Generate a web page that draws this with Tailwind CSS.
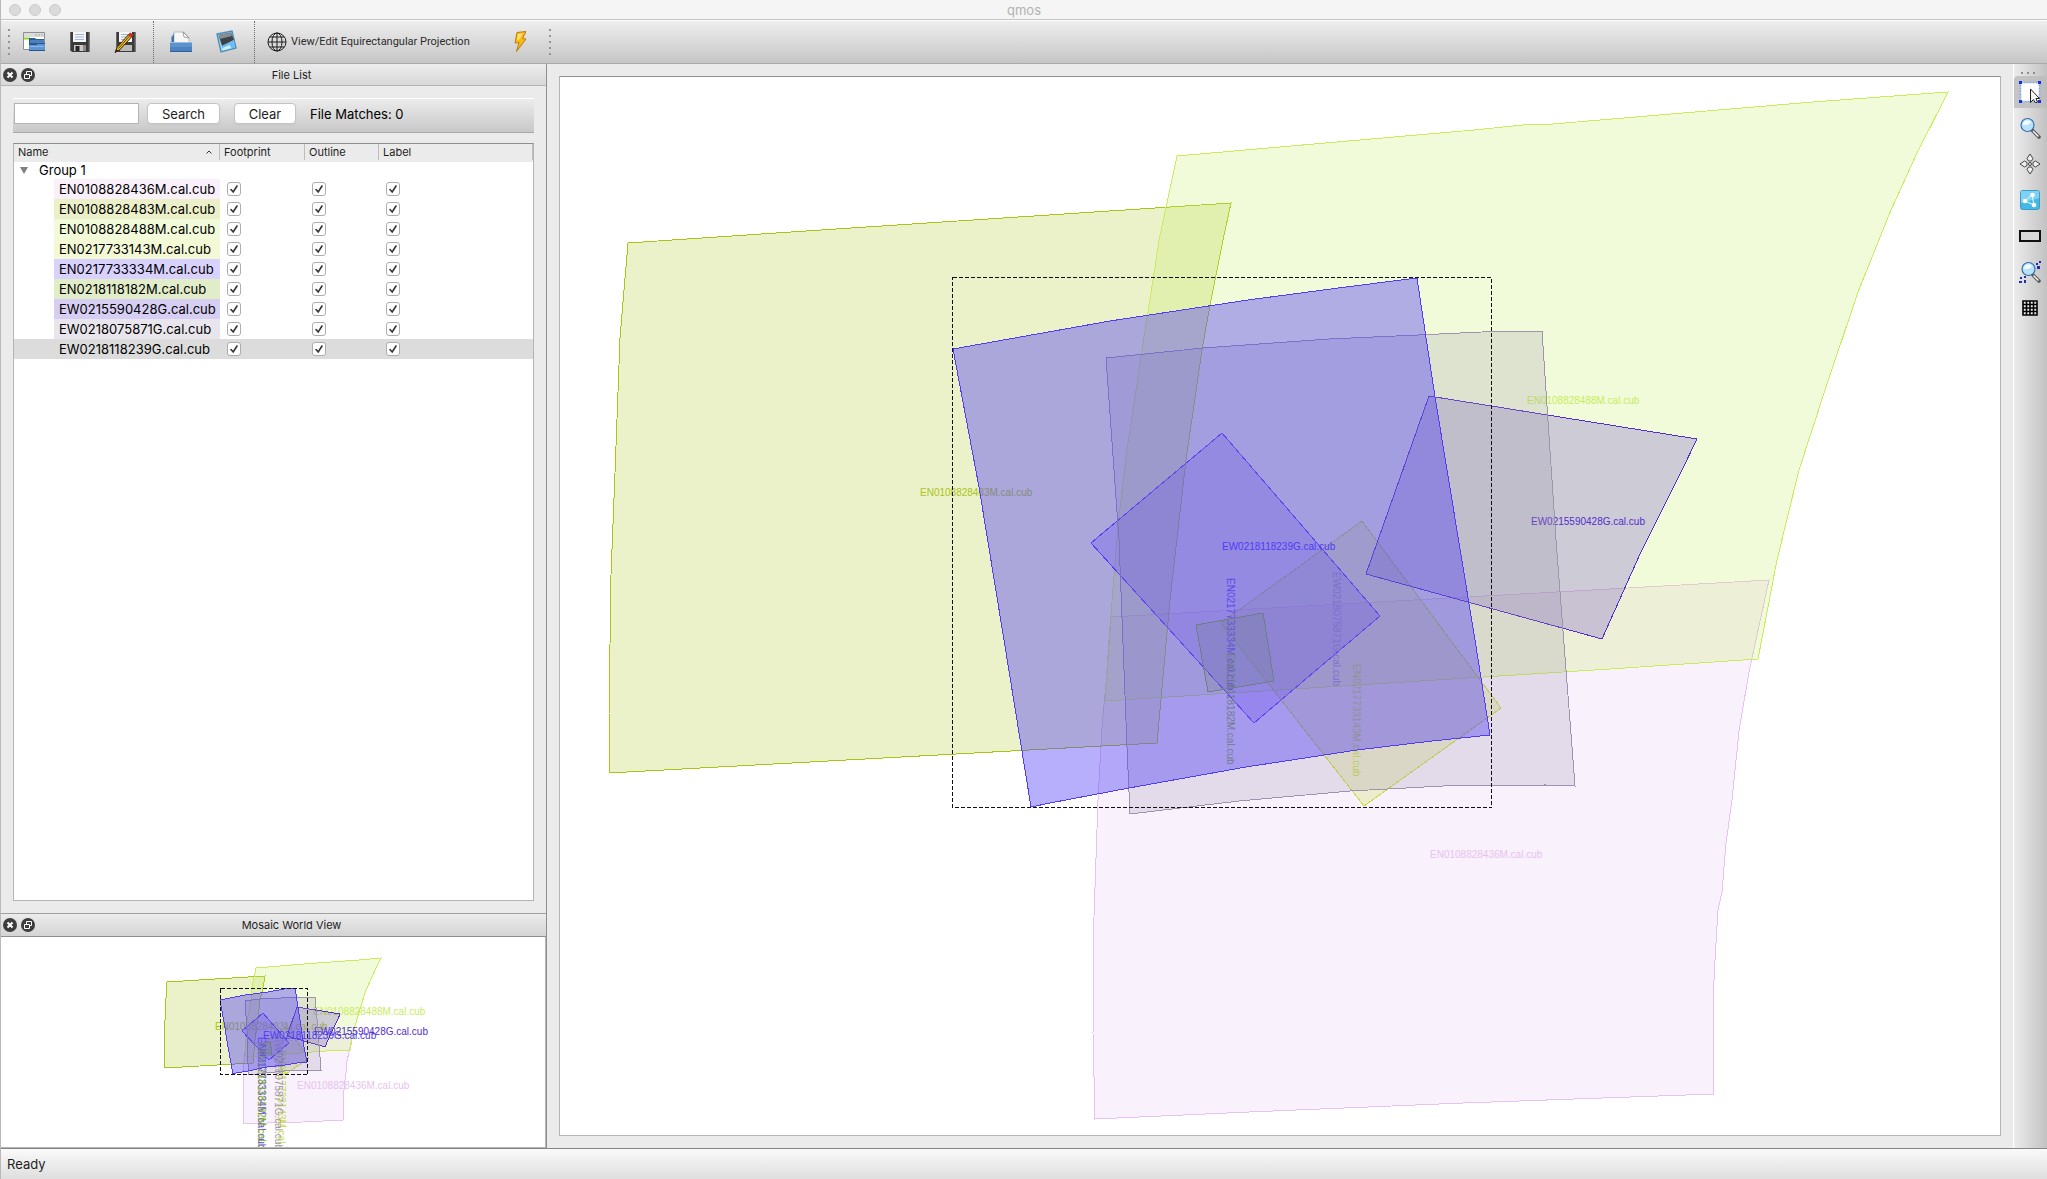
<!DOCTYPE html>
<html lang="en">
<head>
    <meta charset="UTF-8">
    <meta name="viewport" content="width=device-width, initial-scale=1.0">
    <title>qmos</title>
    <script src="https://cdn.jsdelivr.net/npm/@tailwindcss/browser@4"></script>
</head>
<body class="flex h-screen flex-col overflow-hidden border-l border-[#b9b9b9] bg-[#ebebeb] font-['Inter','Liberation_Sans',sans-serif] text-[13px] text-[#1e1e1e]">

    <!-- window title -->
    <header class="flex h-5 shrink-0 items-center border-b border-[#c4c4c4] bg-[#f5f5f5] px-2">
        <div class="flex flex-1 gap-2">
            <span class="size-3 rounded-full border border-[#cbcbcb] bg-[#dadada]"></span>
            <span class="size-3 rounded-full border border-[#cbcbcb] bg-[#dadada]"></span>
            <span class="size-3 rounded-full border border-[#cbcbcb] bg-[#dadada]"></span>
        </div>
        <h1 class="text-[13px] leading-4 text-[#b2b2b2]">qmos</h1>
        <div class="flex-1"></div>
    </header>

    <!-- main toolbar -->
    <div class="flex h-11 shrink-0 items-center border-t border-b border-t-white border-b-[#a9a9a9] bg-linear-to-b from-[#eeeeee] to-[#c6c6c6]">
        <svg class="ml-[7px] h-[26px] w-[2px]" viewBox="0 0 2 26" fill="#949494"><path d="M0 0h2v2H0zM0 6h2v2H0zM0 12h2v2H0zM0 18h2v2H0zM0 24h2v2H0z"/></svg>
        <button class="ml-3 size-6" aria-label="Open project">
            <svg class="size-6" viewBox="0 0 24 24">
                <path d="M1.500 2.500h21v17h-21z" fill="#fff" stroke="#8d8f90"/>
                <path d="M2 3h20v4H2z" fill="#dcdcdc"/>
                <path d="M13 5h2m1 0h2m1 0h2" stroke="#aaa"/>
                <path d="M2 8.500h6" stroke="#8bdc1c" stroke-width="2"/>
                <path d="M7 8h6l1 1h8v5H7z" fill="#2b5c93"/>
                <path d="M8 10h14v3H8z" fill="#4c80ba"/>
                <path d="M7 14h8l1-1h7v8H7z" fill="#5e95d2"/>
                <path d="M7 14.500h8l1-1h7M7 20.500h16" fill="none" stroke="#25588f"/>
                <path d="M8 16.500h14" stroke="#8db7e6"/>
            </svg>
        </button>
        <button class="ml-[22px] size-6" aria-label="Save project">
            <svg class="size-6" viewBox="0 0 24 24">
                <path d="M2 2h19.500v20H4l-2-2z" fill="#3b3b3c"/>
                <path d="M2.500 2v17.500M21 2v19.500" stroke="#696969"/>
                <path d="M5 2h13v10H5z" fill="#f3f5f7"/>
                <path d="M7 4.500h9M7 7h9M7 9.500h9" stroke="#9fb6cc"/>
                <path d="M6 15h12v6H6z" fill="#c9c9c9"/>
                <path d="M7.500 16h4v5h-4z" fill="#272727"/>
                <path d="M15 15h3v6h-3z" fill="#8d8d8d"/>
            </svg>
        </button>
        <button class="ml-[22px] size-6" aria-label="Save project as">
            <svg class="size-6" viewBox="0 0 24 24">
                <path d="M2 2h19.500v20H4l-2-2z" fill="#3b3b3c"/>
                <path d="M2.500 2v17.500M21 2v19.500" stroke="#696969"/>
                <path d="M5 2h13v10H5z" fill="#f3f5f7"/>
                <path d="M7 4.500h9M7 7h9M7 9.500h9" stroke="#9fb6cc"/>
                <path d="M6 15h12v6H6z" fill="#b9b9b9"/>
                <path d="M1 22.500l2-5L15 4l3 2.500L5.500 20z" fill="#f0b92c" stroke="#39290c"/>
                <path d="M4.500 18.500L16 5.500" stroke="#6b4b08"/>
                <path d="M14 5l2-2.500 3.500 2-2 3z" fill="#cf2a20"/>
                <path d="M1 22.500l1.500-3.500 2 2z" fill="#222"/>
            </svg>
        </button>
        <span class="ml-[15px] h-[42px] border-l border-dotted border-[#6d6d6d]"></span>
        <button class="ml-[15px] size-6" aria-label="Open cube">
            <svg class="size-6" viewBox="0 0 24 24">
                <path d="M2 7l4-4v9H2z" fill="#73a7dd"/>
                <path d="M3 8l2-5h10l5 5v7H3z" fill="#3a699f"/>
                <path d="M5 2h10l5 6v5H5z" fill="#f6f6f6" stroke="#a2a2a2" stroke-width=".6"/>
                <path d="M14 2l6 6-5-1z" fill="#fff" stroke="#7d7d7d" stroke-width=".7"/>
                <path d="M1 12h22v9.500H1z" fill="#5d93cd"/>
                <path d="M1 12.500h22" stroke="#95bde8"/>
                <path d="M1 17h22v4.500H1z" fill="#4b82bf"/>
                <path d="M1 21.500h22" stroke="#2f6197"/>
            </svg>
        </button>
        <button class="ml-[22px] size-6" aria-label="Close cube">
            <svg class="size-6" viewBox="0 0 24 24">
                <path d="M2 4l15-3 4 17-15 4z" fill="#a3d9f9" stroke="#4d8fb8" stroke-width="1.400"/>
                <path d="M3.500 5l12.500-2.500L19 10 7 16z" fill="#3e4348"/>
                <path d="M3.500 5l12.500-2.500 1 3.500L5 9z" fill="#868d93"/>
                <path d="M7 16l12-6 1 7.500-13 3z" fill="#6cbdf1"/>
                <path d="M7.500 18l7-3 2 3-9 2.500z" fill="#cdeeff"/>
            </svg>
        </button>
        <span class="ml-[15px] h-[42px] border-l border-dotted border-[#6d6d6d]"></span>
        <button class="ml-3 flex items-center gap-1">
            <svg class="size-5" viewBox="0 0 20 20" fill="none" stroke="#1c1c1c">
                <circle cx="10" cy="10" r="9"/>
                <ellipse cx="10" cy="10" rx="5" ry="9"/>
                <path d="M10 1v18M1 10h18M3 5h14M3 15h14"/>
            </svg>
            <span class="font-['Roboto',sans-serif] text-[11px] leading-4 text-[#2c2c2c]">View/Edit Equirectangular Projection</span>
        </button>
        <button class="ml-[38px] size-6" aria-label="Run">
            <svg class="size-6" viewBox="0 0 24 24">
                <path d="M9 2.500l9-1-3.500 7 3.500.5-9.500 12.500 2.500-9-4 .5z" fill="#fcb914" stroke="#b87e16"/>
                <path d="M10 4l5-.8-4 6.500-2 .3z" fill="#ffe36a"/>
            </svg>
        </button>
        <svg class="ml-[17px] h-[26px] w-[2px]" viewBox="0 0 2 26" fill="#949494"><path d="M0 0h2v2H0zM0 6h2v2H0zM0 12h2v2H0zM0 18h2v2H0zM0 24h2v2H0z"/></svg>
    </div>

    <main class="flex min-h-0 flex-1">
        <!-- docks -->
        <div class="flex w-[546px] shrink-0 flex-col border-r border-[#8f8f8f]">
            <section class="flex min-h-0 flex-1 flex-col">
                <div class="flex h-[22px] shrink-0 items-center gap-1 border-b border-[#b5b5b5] bg-linear-to-b from-[#ececec] to-[#d8d8d8] px-[2px]">
                    <button aria-label="Close file list"><svg class="size-[14px]" viewBox="0 0 14 14"><circle cx="7" cy="7" r="7" fill="#3d3d3d"/><path d="M4.500 4.500l5 5m0-5l-5 5" stroke="#fff" stroke-width="2"/></svg></button>
                    <button aria-label="Float file list"><svg class="size-[14px]" viewBox="0 0 14 14"><circle cx="7" cy="7" r="7" fill="#3d3d3d"/><path d="M3.500 6.500h5v4h-5zM5.500 6V3.500h5v4H9" fill="none" stroke="#fff"/></svg></button>
                    <h2 class="flex-1 text-center text-[11px] leading-4">File List</h2>
                </div>
                <div class="mx-3 mt-3 flex h-[35px] shrink-0 items-center border-t border-b border-t-white border-b-[#a9a9a9] bg-linear-to-b from-[#ececec] to-[#c8c8c8] pb-1 pl-px">
                    <input type="text" aria-label="Search files" class="h-[21px] w-[125px] border border-[#b4b4b4] bg-white px-1">
                    <button class="ml-2 h-[21px] w-[73px] rounded-[4px] border border-[#c4c4c4] bg-white leading-4 shadow-xs">Search</button>
                    <button class="ml-[14px] h-[21px] w-[62px] rounded-[4px] border border-[#c4c4c4] bg-white leading-4 shadow-xs">Clear</button>
                    <span class="ml-[14px] leading-4 text-black">File Matches: 0</span>
                </div>
                <div class="mx-3 mt-[10px] mb-3 min-h-0 flex-1 overflow-hidden border border-[#b4b4b4] border-t-[#8e8e8e] bg-white">
                    <table class="w-full table-fixed border-collapse text-left">
                        <thead>
                            <tr class="h-[18px] bg-[#ebebeb] text-[11px] leading-4">
                                <th class="w-[206px] p-0 pb-[2px] pl-1 font-normal">
                                    <div class="flex items-center justify-between border-r border-[#bdbdbd] pr-[7px]">Name
                                        <svg class="h-1 w-[6px]" viewBox="0 0 6 4" fill="none" stroke="#333"><path d="M.5 3.500L3 1l2.500 2.500"/></svg>
                                    </div>
                                </th>
                                <th class="w-[85px] p-0 pb-[2px] pl-1 font-normal"><div class="border-r border-[#bdbdbd]">Footprint</div></th>
                                <th class="w-[74px] p-0 pb-[2px] pl-1 font-normal"><div class="border-r border-[#bdbdbd]">Outline</div></th>
                                <th class="p-0 pb-[2px] pl-1 font-normal"><div class="border-r border-[#bdbdbd]">Label</div></th>
                            </tr>
                        </thead>
                        <tbody id="fileRows" class="text-black">
                            <tr class="h-[17px] leading-[17px]">
                                <td class="p-0 pl-[6px]" colspan="4">
                                    <div class="flex items-center gap-[11px]">
                                        <svg class="h-[7px] w-2" viewBox="0 0 8 7" fill="#808080"><path d="M0 0h8L4 7z"/></svg>
                                        Group 1
                                    </div>
                                </td>
                            </tr>
                        </tbody>
                    </table>
                </div>
            </section>
            <section class="shrink-0 border-t border-[#a0a0a0]">
                <div class="flex h-[23px] items-center gap-1 border-b border-[#8f8f8f] bg-linear-to-b from-[#ececec] to-[#d4d4d4] px-[2px]">
                    <button aria-label="Close world view"><svg class="size-[14px]" viewBox="0 0 14 14"><circle cx="7" cy="7" r="7" fill="#3d3d3d"/><path d="M4.500 4.500l5 5m0-5l-5 5" stroke="#fff" stroke-width="2"/></svg></button>
                    <button aria-label="Float world view"><svg class="size-[14px]" viewBox="0 0 14 14"><circle cx="7" cy="7" r="7" fill="#3d3d3d"/><path d="M3.500 6.500h5v4h-5zM5.500 6V3.500h5v4H9" fill="none" stroke="#fff"/></svg></button>
                    <h2 class="flex-1 text-center text-[11px] leading-4">Mosaic World View</h2>
                </div>
                <div class="border-r border-b border-[#b4b4b4] bg-white">
                    <svg id="worldView" class="block h-[210px] w-full" viewBox="1 937 544 210" font-family="Liberation Sans, sans-serif" font-size="10"></svg>
                </div>
            </section>
        </div>

        <!-- mosaic -->
        <div class="min-w-0 flex-1 px-3 pt-3 pb-3">
            <div class="h-full border border-[#b4b4b4] border-t-[#8e8e8e] bg-white">
                <svg id="mosaicView" class="block size-full" viewBox="560 77 1440 1058" font-family="Liberation Sans, sans-serif" font-size="10"></svg>
            </div>
        </div>

        <!-- tools -->
        <nav class="flex w-[34px] shrink-0 flex-col gap-1 border-l border-white bg-linear-to-r from-[#ececec] to-[#c2c2c2]">
            <svg class="-mb-1 h-3 w-full" viewBox="0 0 33 12" fill="#8e8e8e"><path d="M7 8h2v2H7zM13 8h2v2h-2zM19 8h2v2h-2z"/></svg>
            <button class="flex h-8 items-center rounded-t-sm bg-[#bcbcbc]/80 pl-[5px]" aria-label="Select">
                <svg class="size-[22px]" viewBox="0 0 22 22">
                    <path d="M1.500 1.500h19v19h-19z" fill="#fff" stroke="#7fa4e8" stroke-width="1.500" stroke-dasharray="2 1"/>
                    <path d="M0 0h3v3H0zM19 0h3v3h-3zM0 19h3v3H0zM19 19h3v3h-3z" fill="#1530e0"/>
                    <path d="M11.500 8v13.500l3-3 2 3.500 2-1-1.500-3.500h3.500z" fill="#f4f4f4" stroke="#222"/>
                </svg>
            </button>
            <button class="flex h-8 items-center pl-[5px]" aria-label="Zoom">
                <svg class="size-[22px]" viewBox="0 0 22 22">
                    <path d="M13 13l7 7" stroke="#555" stroke-width="3.500" stroke-linecap="round"/>
                    <path d="M14 14l5.500 5.500" stroke="#f4f4f4" stroke-width="1.500"/>
                    <circle cx="8.500" cy="8" r="6.500" fill="#b9e3fb" stroke="#3970ad" stroke-width="1.200"/>
                    <path d="M4 8a4.500 4.500 0 0 1 8-3c-2 3-5 3-8 3z" fill="#f2fbff"/>
                </svg>
            </button>
            <button class="flex h-8 items-center pl-[5px]" aria-label="Pan">
                <svg class="size-[22px]" viewBox="0 0 22 22" fill="#f0f0f0" stroke="#444">
                    <path d="M11 1l3 4.500-1.500 2.500h-3L8 5.500zM11 21l3-4.500-1.500-2.500h-3L8 16.500zM1 11l4.500-3L8 9.500v3L5.500 14zM21 11l-4.500-3L14 9.500v3l2.500 1.500z"/>
                    <circle cx="11" cy="11" r="1.500"/>
                </svg>
            </button>
            <button class="flex h-8 items-center pl-[6px]" aria-label="Control network">
                <svg class="size-5" viewBox="0 0 20 20">
                    <rect x=".5" y=".5" width="19" height="19" rx="2" fill="#45b9e6" stroke="#3b9cc6"/>
                    <path d="M1 1h18v7L1 13z" fill="#7fd2f2"/>
                    <path d="M12 5l-7 6 9 4z" fill="none" stroke="#e8f9ff"/>
                    <circle cx="12.500" cy="5" r="2.300" fill="#fff"/><circle cx="5" cy="11" r="2.300" fill="#fff"/><circle cx="14" cy="15" r="2.300" fill="#fff"/>
                </svg>
            </button>
            <button class="flex h-8 items-center pl-[5px]" aria-label="Area">
                <svg class="h-3 w-[22px]" viewBox="0 0 22 12"><path d="M1 1h20v10H1z" fill="#d9d9d9" stroke="#111" stroke-width="2"/></svg>
            </button>
            <button class="flex h-8 items-center pl-[5px]" aria-label="Find">
                <svg class="size-[22px]" viewBox="0 0 22 22">
                    <path d="M17 2h2v2h-2zM20 0h2v2h-2zM18 5h3v3h-3zM0 20h3v2H0zM1 16h2v2H1zM5 19h2v3H5zM5 15h2v2H5z" fill="#1a2fb5"/>
                    <path d="M14 14l6 6" stroke="#555" stroke-width="3.500" stroke-linecap="round"/>
                    <path d="M14.500 14.500l5 5" stroke="#f4f4f4" stroke-width="1.500"/>
                    <circle cx="9.500" cy="8" r="6.500" fill="#b9e3fb" stroke="#3970ad" stroke-width="1.200"/>
                    <path d="M5 8a4.500 4.500 0 0 1 8-3c-2 3-5 3-8 3z" fill="#f2fbff"/>
                </svg>
            </button>
            <button class="flex h-8 items-center pl-2" aria-label="Grid">
                <svg class="size-4" viewBox="0 0 16 16" fill="#eee" stroke="#000" stroke-width="1.600"><path d="M1 1h14v14H1zM1 4.500h14M1 8h14M1 11.500h14M4.500 1v14M8 1v14M11.500 1v14"/></svg>
            </button>
        </nav>
    </main>

    <footer class="flex h-[31px] shrink-0 items-center border-t border-[#848484] bg-linear-to-b from-[#fafafa] to-[#dedede] px-[6px]">
        <span class="leading-4">Ready</span>
    </footer>

    <script>
        // one entry per cube, bottom of the stack first
        const cubes = [
            { name: 'EN0108828436M.cal.cub', color: '#e6c3f0', cell: '#f9f0fc', label: [1430, 850],
              points: '1111,617 1610,589 1769,580 1749,672 1739,731 1732,800 1726,843 1722,892 1718,910 1715,960 1713,1000 1713,1063 1714,1094 1463,1103 1249,1112 1095,1119 1093,1033 1094,917 1098,800 1102,727 1107,673' },
            { name: 'EN0108828483M.cal.cub', color: '#acc418', cell: '#ebf0c8', label: [920, 488],
              points: '628,243 821,230 1231,203 1223,240 1210,305 1202,350 1186,460 1170,600 1157,743 609,773 609,714 611,575 615,473 620,338' },
            { name: 'EN0108828488M.cal.cub', color: '#c8ec5c', cell: '#f1fbda', label: [1527, 396],
              points: '1177,156 1474,130 1523,125 1553,124 1813,102 1948,92 1917,153 1891,210 1858,292 1825,390 1799,470 1777,560 1758,659 1610,669 1105,701 1109,640 1118,525 1127,450 1142,350 1153,280 1159,240' },
            { name: 'EN0217733143M.cal.cub', color: '#c8dc3c', cell: '#f3f9d5', label: [1361, 664], vertical: true,
              points: '1362,521 1501,708 1364,806 1221,623' },
            { name: 'EN0217733334M.cal.cub', color: '#5d3cfb', cell: '#d9d1fe', label: [1235, 578], vertical: true,
              points: '1222,433 1380,616 1254,723 1091,543' },
            { name: 'EN0218118182M.cal.cub', color: '#7bb215', cell: '#e0edc8', label: [1235, 653], vertical: true,
              points: '1196,625 1263,613 1274,681 1208,692' },
            { name: 'EW0215590428G.cal.cub', color: '#552ecc', cell: '#d7cef3', label: [1531, 517],
              points: '1429,396 1697,439 1682,470 1640,554 1602,639 1366,574' },
            { name: 'EW0218075871G.cal.cub', color: '#9d95ae', cell: '#e8e6ec', label: [1341, 572], vertical: true,
              points: '1106,358 1203,348 1329,339 1418,335 1503,331 1542,331 1556,540 1575,786 1546,785 1443,786 1350,791 1239,801 1130,814 1127,747 1119,540' },
            { name: 'EW0218118239G.cal.cub', color: '#503cf5', cell: '#dcdcdc', label: [1222, 542], selected: true,
              points: '953,349 1110,321 1248,300 1346,287 1417,278 1435,397 1475,640 1490,735 1432,741 1357,750 1246,767 1129,788 1050,803 1031,807 1004,640 979,487' }
        ];

        function drawScene(id, scale, dx, dy) {
            const px = x => Math.round(x * scale + dx);
            const py = y => Math.round(y * scale + dy);
            let out = '';
            for (const cube of cubes) {
                const points = cube.points.split(' ').map(p => {
                    const [x, y] = p.split(',');
                    return px(x) + ',' + py(y);
                }).join(' ');
                const turn = cube.vertical ? ' rotate(90)' : '';
                out += `<polygon points="${points}" fill="${cube.color}" fill-opacity="${cube.selected ? 0.41 : 0.235}" stroke="${cube.color}" shape-rendering="crispEdges"/>`;
                out += `<text y="8" fill="${cube.color}" transform="translate(${px(cube.label[0])} ${py(cube.label[1] - 0.5)})${turn}">${cube.name}</text>`;
            }
            // selection bounds
            out += `<path d="M${px(952) + 0.5} ${py(277) + 0.5}H${px(1491) + 0.5}V${py(807) + 0.5}H${px(952) + 0.5}Z" fill="none" stroke="#111" stroke-dasharray="4 2" shape-rendering="crispEdges"/>`;
            document.getElementById(id).innerHTML = out;
        }

        function checkCell(name, column) {
            return `<td class="p-0 pl-[7px]">
                <label class="relative block size-[14px]">
                    <input type="checkbox" checked aria-label="${column} ${name}" class="peer block size-[14px] appearance-none rounded-[3px] border border-[#adadad] bg-white">
                    <svg class="pointer-events-none absolute inset-0 hidden size-[14px] peer-checked:block" viewBox="0 0 14 14" fill="none" stroke="#333" stroke-width="1.600" stroke-linecap="round"><path d="M4 7.500l2.200 2.500L10 4"/></svg>
                </label></td>`;
        }

        const rows = cubes.map(cube => `<tr class="h-5 leading-5 ${cube.selected ? 'bg-[#dcdcdc]' : ''}">
            <td class="p-0 pl-10"><div class="h-5 pl-[5px]" style="background-color: ${cube.cell}">${cube.name}</div></td>
            ${checkCell(cube.name, 'Footprint')}${checkCell(cube.name, 'Outline')}${checkCell(cube.name, 'Label')}</tr>`);
        document.getElementById('fileRows').insertAdjacentHTML('beforeend', rows.join(''));

        drawScene('mosaicView', 1, 0, 0);
        drawScene('worldView', 0.162, 65.5, 943);
    </script>
</body>
</html>
